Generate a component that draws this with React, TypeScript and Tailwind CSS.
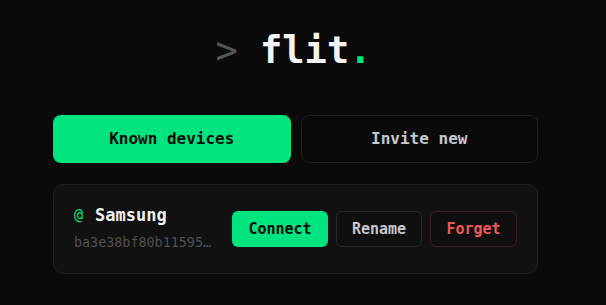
import { useState } from 'react'

type Device = {
  id: string
  name: string
  hash: string
}

const DEVICES: Device[] = [
  { id: '1', name: 'Samsung', hash: 'ba3e38bf80b11595c2d4e7a91f03' },
]

const MONO = "font-['DejaVu_Sans_Mono','Liberation_Mono',monospace]"

function DeviceCard({ device }: { device: Device }) {
  return (
    <div className="flex items-center justify-between rounded-[10px] border border-[#1f1f1f] bg-[#111111] h-[90px] pl-[20px] pr-[20px]">
      <div className="flex flex-col min-w-0">
        <div className="flex items-center gap-[12px] leading-none h-[20px]">
          <span className="text-[#00e47f] text-[15px]">@</span>
          <span className="text-[#f2f2f2] text-[17px] font-bold">{device.name}</span>
        </div>
        <div className="mt-[7px] w-[140px] truncate text-[13.4px] text-[#4f4f4f] leading-[20px]">
          {device.hash}
        </div>
      </div>
      <div className="flex items-center gap-2">
        <button
          type="button"
          className="h-9 w-[96px] rounded-md bg-[#00e47f] text-[15px] font-bold text-[#0a0a0a]"
        >
          Connect
        </button>
        <button
          type="button"
          className="h-9 w-[86px] rounded-md border border-[#262626] bg-[#0f0f0f] text-[15px] font-bold text-[#c4c8cc]"
        >
          Rename
        </button>
        <button
          type="button"
          className="h-9 w-[87px] rounded-md border border-[#3a1f1f] bg-[#0f0f0f] text-[15px] font-bold text-[#f0595a]"
        >
          Forget
        </button>
      </div>
    </div>
  )
}

export default function App() {
  const [tab, setTab] = useState<'known' | 'invite'>('known')

  return (
    <div className={`min-h-[305px] bg-[#0a0a0a] ${MONO}`}>
      <div className="ml-[53px] w-[485px] pt-[26px]">
        <h1 className="text-center text-[37px] leading-[50px] font-bold text-[#f4f4f4] pr-[4px]">
          <span className="text-[#555555] font-normal">&gt;</span> flit<span className="text-[#00e47f]">.</span>
        </h1>
        <div className="mt-[39px] grid grid-cols-2 gap-[10px]">
          <button
            type="button"
            onClick={() => setTab('known')}
            className={
              tab === 'known'
                ? 'h-12 rounded-lg bg-[#00e47f] text-[16px] font-bold text-[#0a0a0a]'
                : 'h-12 rounded-lg border border-[#1f1f1f] bg-[#0a0a0a] text-[16px] font-bold text-[#c4c8cc]'
            }
          >
            Known devices
          </button>
          <button
            type="button"
            onClick={() => setTab('invite')}
            className={
              tab === 'invite'
                ? 'h-12 rounded-lg bg-[#00e47f] text-[16px] font-bold text-[#0a0a0a]'
                : 'h-12 rounded-lg border border-[#1f1f1f] bg-[#0a0a0a] text-[16px] font-bold text-[#c4c8cc]'
            }
          >
            Invite new
          </button>
        </div>
        <div className="mt-[21px] flex flex-col gap-2">
          {DEVICES.map((d) => (
            <DeviceCard key={d.id} device={d} />
          ))}
        </div>
      </div>
    </div>
  )
}
